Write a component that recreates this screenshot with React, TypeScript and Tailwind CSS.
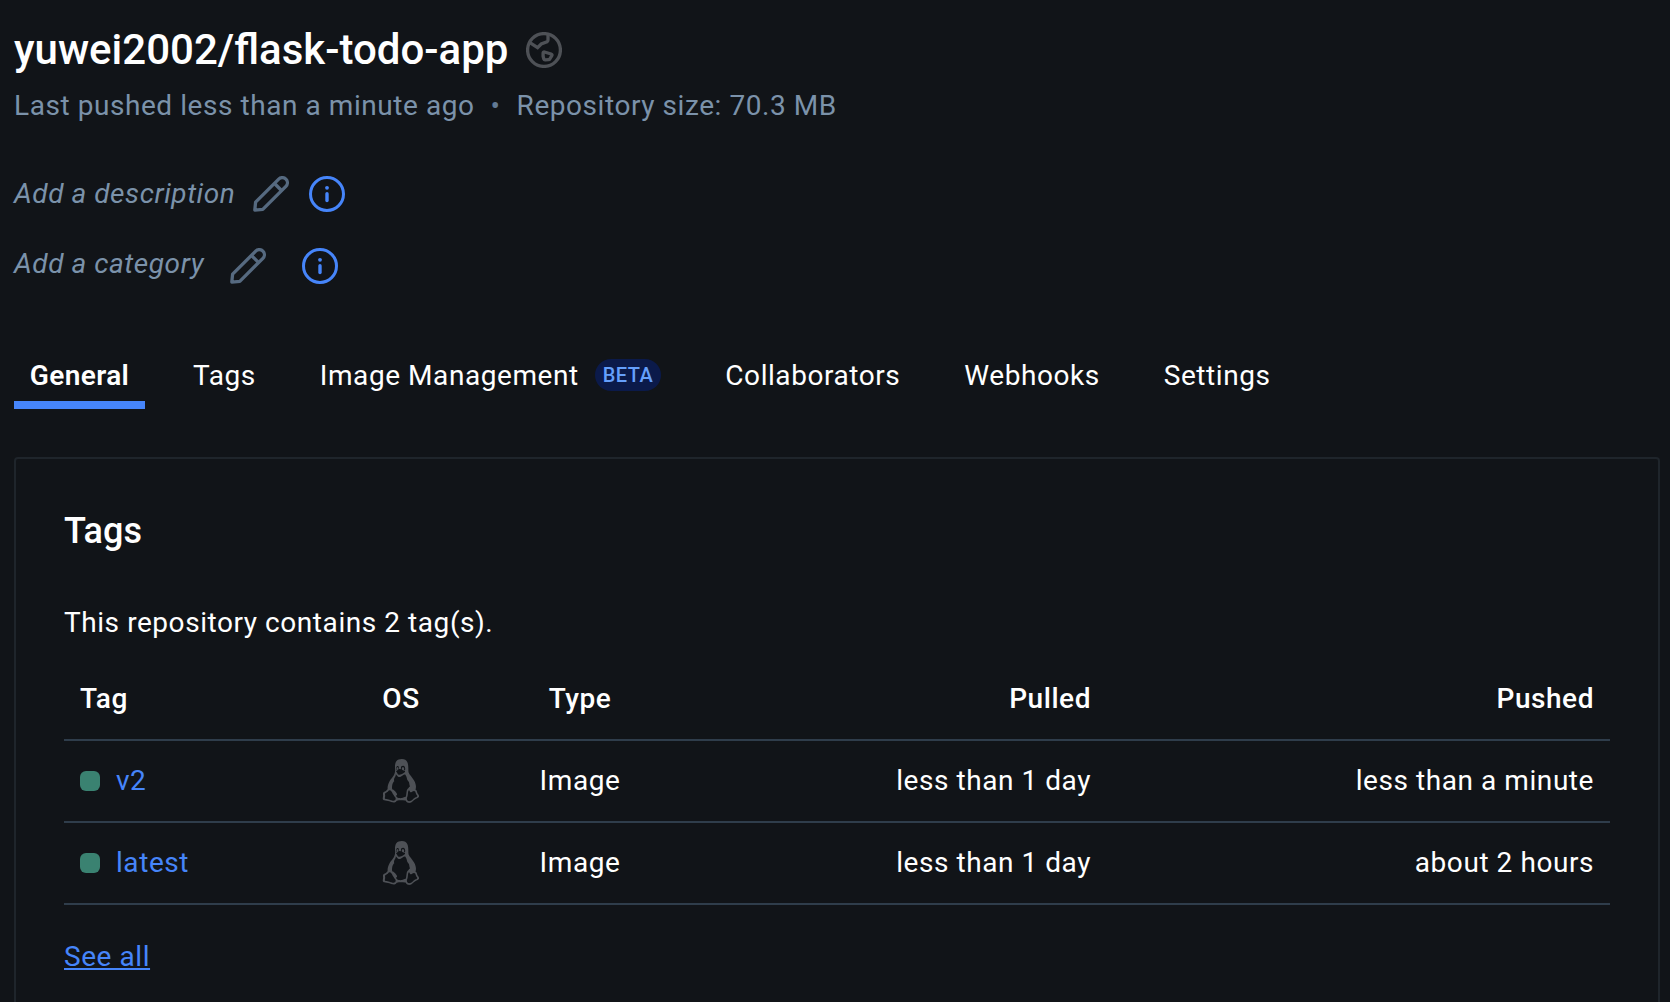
import React from "react";
import { VscTerminalLinux } from "react-icons/vsc";

function GlobeIcon() {
  return (
    <svg viewBox="0 0 36 36" className="size-9 text-[#4e5156]" fill="none" stroke="currentColor" strokeWidth="3.3">
      <circle cx="18" cy="18" r="16.4" />
      <path d="M3.500 10.300 11.600 15.600 15.200 12 21 9.800Q22 9.200 22 8V2" />
      <path d="M17.100 20.900q.2-1.200 1.400-.9l6.600 2q1.400.5.700 1.700l-2 3.300q-.4.600-1.100.6l-3.600.2q-1 0-1.300-.9l-.7-2.600z" strokeLinejoin="round" />
    </svg>
  );
}

function PencilIcon() {
  return (
    <svg viewBox="0 0 36 36" className="size-9 text-[#566a80]" fill="none" stroke="currentColor" strokeWidth="3.300" strokeLinejoin="round">
      <path d="M1.800 34.200 2.600 26.200 25.700 3.100a4.900 4.900 0 0 1 7.200 7.200L9.800 33.400Z" />
      <path d="M21.500 7.500 28.500 14.500" />
    </svg>
  );
}

function InfoIcon() {
  return (
    <svg viewBox="0 0 36 36" className="size-9 text-[#4685fa]" fill="none" stroke="currentColor" strokeWidth="3">
      <circle cx="18" cy="18" r="16.500" />
      <path d="M18 17.800v6.800" strokeWidth="3.400" strokeLinecap="round" />
      <circle cx="18" cy="11.800" r="1.900" fill="currentColor" stroke="none" />
    </svg>
  );
}

const tabs = ["Collaborators", "Webhooks", "Settings"];

const rows = [
  { tag: "v2", pulled: "less than 1 day", pushed: "less than a minute" },
  { tag: "latest", pulled: "less than 1 day", pushed: "about 2 hours" },
];

const grid = "grid grid-cols-[273px_128px_230px_396px_1fr] border-b-2 border-[#2f3d4b]";

export default function App() {
  return (
    <div className="h-[1002px] w-[1670px] overflow-hidden bg-[#111418] pl-[14px] pr-[10px] font-[Roboto,sans-serif] text-[28px] leading-[40px] tracking-[0.56px] text-white">
      <header className="pt-[22px]">
        <div className="flex h-14 items-center gap-[18px]">
          <h1 className="text-[42px] font-medium leading-[56px] tracking-normal">yuwei2002/flask-todo-app</h1>
          <GlobeIcon />
        </div>
        <div className="mt-2 flex items-center text-[#7b92aa]">
          <span>Last pushed less than a minute ago</span>
          <span className="mx-4 text-[#627a94]">•</span>
          <span>Repository size: 70.3 MB</span>
        </div>
        <div className="mt-12 flex h-10 items-start italic text-[#7b92aa]">
          <span>Add a description</span>
          <span className="ml-[18px] mt-[2px]"><PencilIcon /></span>
          <span className="ml-[20px] mt-[2px]"><InfoIcon /></span>
        </div>
        <div className="mt-[30px] flex h-10 items-start italic text-[#7b92aa]">
          <span>Add a category</span>
          <span className="ml-[26px] mt-1"><PencilIcon /></span>
          <span className="ml-[36px] mt-1"><InfoIcon /></span>
        </div>
      </header>
      <nav className="mt-[71px] flex h-[54px] items-start leading-[42px]">
        <div className="h-[54px] w-[131px] border-b-8 border-[#4685fa] text-center font-semibold tracking-[0.4px]">General</div>
        <div className="ml-8 px-4">Tags</div>
        <div className="ml-8 flex items-start px-4">
          Image Management
          <span className="ml-4 mt-1 h-8 rounded-full bg-[#0b1a4a] px-2 text-[20px] font-medium leading-8 tracking-[0.5px] text-[#659ffb]">BETA</span>
        </div>
        {tabs.map((tab) => (
          <div key={tab} className="ml-8 px-4">{tab}</div>
        ))}
      </nav>
      <main className="mt-12 h-[600px] rounded-t-[4px] border-2 border-[#1f252b] px-12 pt-[46px]">
        <h2 className="text-[36px] font-medium leading-[52px] tracking-normal">Tags</h2>
        <p className="mt-[46px]">This repository contains 2 tag(s).</p>
        <div className={grid + " mt-[16px] h-[82px] items-center font-medium"}>
          <div className="pl-4">Tag</div>
          <div className="text-center">OS</div>
          <div className="text-center">Type</div>
          <div className="text-right">Pulled</div>
          <div className="pr-4 text-right">Pushed</div>
        </div>
        {rows.map((row) => (
          <div key={row.tag} className={grid + " h-[82px] items-center"}>
            <div className="flex items-center pl-4">
              <span className="size-5 rounded-[6px] bg-[#3a8271]" />
              <span className="ml-4 text-[#4685fa]">{row.tag}</span>
            </div>
            <div className="flex justify-center text-[#4e5156]"><VscTerminalLinux size={44} /></div>
            <div className="text-center">Image</div>
            <div className="text-right">{row.pulled}</div>
            <div className="pr-4 text-right">{row.pushed}</div>
          </div>
        ))}
        <div className="mt-8">
          <a className="text-[#4685fa] underline decoration-2 underline-offset-[2px]">See all</a>
        </div>
      </main>
    </div>
  );
}
